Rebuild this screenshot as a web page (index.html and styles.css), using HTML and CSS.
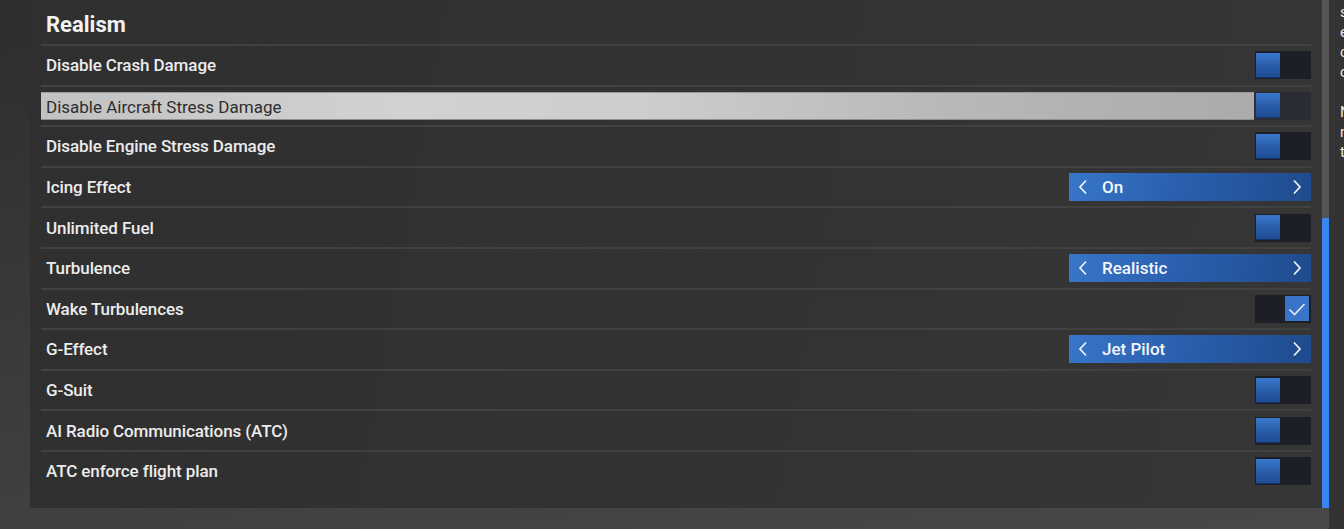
FILE: index.html
```html
<!DOCTYPE html>
<html>
<head>
<meta charset="utf-8">
<link rel="stylesheet" href="styles.css">
</head>
<body>
<div class="page">
  <div class="panel">
    <div class="content">
      <h2 class="title">Realism</h2>
      <div class="row"><span class="label">Disable Crash Damage</span><span class="toggle"><span class="knob"></span></span></div>
      <div class="row hl"><span class="label">Disable Aircraft Stress Damage</span><span class="toggle"><span class="knob"></span></span></div>
      <div class="row"><span class="label">Disable Engine Stress Damage</span><span class="toggle"><span class="knob"></span></span></div>
      <div class="row"><span class="label">Icing Effect</span><span class="select"><svg class="chev" viewBox="0 0 10 16"><path d="M8 1.5 L2 8 L8 14.5"/></svg><span class="val">On</span><svg class="chev" viewBox="0 0 10 16"><path d="M2 1.5 L8 8 L2 14.5"/></svg></span></div>
      <div class="row"><span class="label">Unlimited Fuel</span><span class="toggle"><span class="knob"></span></span></div>
      <div class="row"><span class="label">Turbulence</span><span class="select"><svg class="chev" viewBox="0 0 10 16"><path d="M8 1.5 L2 8 L8 14.5"/></svg><span class="val">Realistic</span><svg class="chev" viewBox="0 0 10 16"><path d="M2 1.5 L8 8 L2 14.5"/></svg></span></div>
      <div class="row"><span class="label">Wake Turbulences</span><span class="toggle on"><span class="knob"><svg viewBox="0 0 24 24"><path d="M4.5 12.5 L9.5 17.5 L19.5 7"/></svg></span></span></div>
      <div class="row"><span class="label">G-Effect</span><span class="select"><svg class="chev" viewBox="0 0 10 16"><path d="M8 1.5 L2 8 L8 14.5"/></svg><span class="val">Jet Pilot</span><svg class="chev" viewBox="0 0 10 16"><path d="M2 1.5 L8 8 L2 14.5"/></svg></span></div>
      <div class="row"><span class="label">G-Suit</span><span class="toggle"><span class="knob"></span></span></div>
      <div class="row"><span class="label">AI Radio Communications (ATC)</span><span class="toggle"><span class="knob"></span></span></div>
      <div class="row"><span class="label">ATC enforce flight plan</span><span class="toggle"><span class="knob"></span></span></div>
    </div>
    <div class="scrollbar"><div class="thumb"></div></div>
  </div>
  <div class="side">
    <p>settings</p>
    <p>effects</p>
    <p>conditions</p>
    <p>control</p>
    <p class="gap">None</p>
    <p>note</p>
    <p>text</p>
  </div>
</div>
</body>
</html>
```
FILE: styles.css
```css
html, body {
  margin: 0;
  padding: 0;
}
body {
  width: 1344px;
  height: 529px;
  overflow: hidden;
  background: linear-gradient(170deg, #2c2d2f 0%, #3a3a3b 45%, #484848 100%);
  font-family: Roboto, "Noto Sans", sans-serif;
  color: #f0f0f0;
}
.page {
  display: flex;
  height: 529px;
}
.panel {
  margin-left: 30px;
  width: 1299px;
  height: 508px;
  display: flex;
  background: linear-gradient(100deg, #2f2f30 0%, #333333 60%, #363636 100%);
}
.content {
  width: 1270px;
  padding-left: 11px;
  display: flex;
  flex-direction: column;
}
.title {
  margin: 0;
  height: 44px;
  padding-left: 5px;
  font-size: 22px;
  font-weight: 700;
  line-height: 50px;
  color: #f2f2f2;
  box-sizing: border-box;
}
.row {
  height: 40.6px;
  border-top: 2px solid #414141;
  box-sizing: border-box;
  display: flex;
  align-items: center;
  justify-content: space-between;
}
.label {
  padding-left: 5px;
  font-size: 17px;
  font-weight: 500;
  color: #ececec;
  letter-spacing: -0.1px;
}
.row.hl .label {
  flex: 1;
  height: 28px;
  line-height: 28px;
  margin-right: 1px;
  color: #2e2e30;
  font-weight: 400;
  letter-spacing: 0;
  box-sizing: border-box;
  background: linear-gradient(90deg, #c2c2c2 0%, #d2d2d2 30%, #cdcdcd 50%, #b8b8b8 75%, #ababab 100%);
  border-top: 1px solid #9a9a9a;
  border-bottom: 1px solid #8e8e8e;
}
.toggle {
  width: 56px;
  height: 28px;
  background: #1d1f26;
  box-sizing: border-box;
  padding: 1px;
  display: flex;
  align-items: center;
}
.row.hl .toggle {
  background: #2a2c33;
}
.knob {
  width: 24px;
  height: 25px;
  box-sizing: border-box;
  background: linear-gradient(180deg, #3a78cc 0%, #2a5eaa 50%, #1f4c92 100%);
  border-bottom: 1px solid #15336a;
}
.toggle.on {
  justify-content: flex-end;
  padding-right: 2px;
}
.toggle.on .knob {
  background: #3a74c8;
  border-bottom: none;
  display: flex;
  align-items: center;
  justify-content: center;
}
.toggle.on svg {
  width: 24px;
  height: 24px;
  fill: none;
  stroke: #e4ebf5;
  stroke-width: 1.6;
}
.select {
  width: 242px;
  height: 28px;
  box-sizing: border-box;
  display: flex;
  align-items: center;
  padding: 0 9px 0 9px;
  background: linear-gradient(100deg, #3876c8 0%, #2b5fae 45%, #1f4b8d 100%);
}
.chev {
  width: 10px;
  height: 16px;
  fill: none;
  stroke: #f2f4f8;
  stroke-width: 1.7;
}
.val {
  flex: 1;
  padding-left: 14px;
  font-size: 17px;
  font-weight: 500;
  color: #f4f6fa;
}
.scrollbar {
  margin-left: 11px;
  width: 7px;
  height: 508px;
  background: #555555;
  display: flex;
  flex-direction: column;
  justify-content: flex-end;
}
.thumb {
  height: 290px;
  background: #3a86f0;
}
.side {
  flex: 1;
  padding-left: 11px;
  background: #333333;
  height: 529px;
  overflow: hidden;
  white-space: nowrap;
  font-size: 15px;
  line-height: 20px;
  color: #e8e8e8;
  padding-top: 2px;
  box-sizing: border-box;
}
.side p {
  margin: 0;
}
.side p.gap {
  margin-top: 20px;
}
```
